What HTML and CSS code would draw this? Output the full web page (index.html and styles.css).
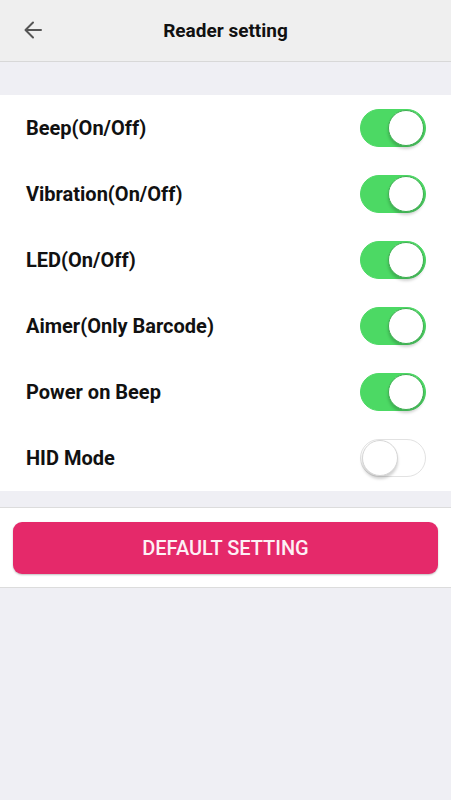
FILE: index.html
```html
<!DOCTYPE html>
<html>
<head>
<meta charset="utf-8">
<link rel="stylesheet" href="styles.css">
</head>
<body>
<header class="bar">
  <svg class="back" width="20" height="20" viewBox="0 0 20 20"><path d="M18 10H3M10 2.5L2.5 10L10 17.5" fill="none" stroke="#555" stroke-width="2" stroke-linecap="round" stroke-linejoin="round"/></svg>
  <h1 class="title">Reader setting</h1>
</header>
<section class="list">
  <div class="row"><span class="label">Beep(On/Off)</span><span class="toggle on"><span class="knob"></span></span></div>
  <div class="row"><span class="label">Vibration(On/Off)</span><span class="toggle on"><span class="knob"></span></span></div>
  <div class="row"><span class="label">LED(On/Off)</span><span class="toggle on"><span class="knob"></span></span></div>
  <div class="row"><span class="label">Aimer(Only Barcode)</span><span class="toggle on"><span class="knob"></span></span></div>
  <div class="row"><span class="label">Power on Beep</span><span class="toggle on"><span class="knob"></span></span></div>
  <div class="row"><span class="label">HID Mode</span><span class="toggle"><span class="knob"></span></span></div>
</section>
<section class="actions">
  <button class="btn">DEFAULT SETTING</button>
</section>
</body>
</html>
```
FILE: styles.css
```css
* { box-sizing: border-box; }
html, body { margin: 0; padding: 0; }
body {
  background: #efeff4;
  font-family: Roboto, "Noto Sans", sans-serif;
  width: 451px;
  height: 800px;
  overflow: hidden;
}
.bar {
  height: 62px;
  background: #efefef;
  border-bottom: 1px solid #d8d8d8;
  display: flex;
  align-items: center;
  justify-content: center;
  position: relative;
}
.back {
  position: absolute;
  left: 23px;
  top: 20px;
}
.title {
  margin: 0;
  font-size: 19px;
  font-weight: 700;
  color: #111;
}
.list {
  margin-top: 33px;
  background: #fff;
  display: flex;
  flex-direction: column;
}
.row {
  height: 66px;
  display: flex;
  align-items: center;
  justify-content: space-between;
  padding: 0 25px 0 26px;
}
.label {
  font-size: 20px;
  font-weight: 700;
  color: #111;
}
.toggle {
  width: 66px;
  height: 38px;
  border-radius: 19px;
  background: #fff;
  border: 1px solid #e2e2e2;
  display: flex;
  align-items: center;
  justify-content: flex-start;
  padding: 0 1px;
}
.toggle.on {
  background: #4cd964;
  border-color: #4cd964;
  justify-content: flex-end;
}
.knob {
  width: 36px;
  height: 36px;
  border-radius: 50%;
  background: #fff;
  border: 1px solid #d6d6d6;
  box-shadow: 0 3px 3px rgba(0,0,0,0.18);
}
.toggle.on .knob { border-color: #3fae52; }
.actions {
  margin-top: 16px;
  background: #fff;
  border-top: 1px solid #dcdcdc;
  border-bottom: 1px solid #dcdcdc;
  padding: 14px 13px 13px;
  display: flex;
}
.btn {
  flex: 1;
  height: 52px;
  border: none;
  border-radius: 9px;
  background: #e5296a;
  color: #fdf0f5;
  font-family: Roboto, "Noto Sans", sans-serif;
  font-size: 20px;
  font-weight: 500;
  box-shadow: 0 1px 2px rgba(0,0,0,0.25);
}
```
